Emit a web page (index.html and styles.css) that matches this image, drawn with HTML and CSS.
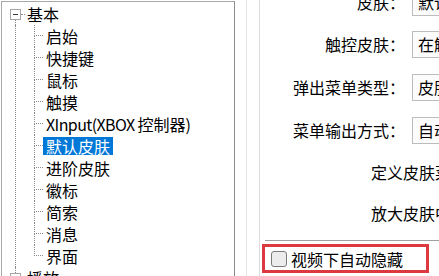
FILE: index.html
```html
<!DOCTYPE html>
<html lang="zh-CN">
<head>
<meta charset="utf-8">
<title>设置</title>
<link rel="stylesheet" href="styles.css">
</head>
<body>
<div class="window">
  <div class="tree-panel">
    <ul class="tree">
      <li class="node open">
        <div class="row">
          <span class="gutter"><span class="exp minus"></span></span>
          <span class="hline"></span>
          <span class="label">基本</span>
        </div>
        <ul class="children">
          <li class="leaf"><span class="elbow"></span><span class="label">启始</span></li>
          <li class="leaf"><span class="elbow"></span><span class="label">快捷键</span></li>
          <li class="leaf"><span class="elbow"></span><span class="label">鼠标</span></li>
          <li class="leaf"><span class="elbow"></span><span class="label">触摸</span></li>
          <li class="leaf"><span class="elbow"></span><span class="label"><span class="latin">XInput(XBOX </span>控制器)</span></li>
          <li class="leaf"><span class="elbow"></span><span class="label selected">默认皮肤</span></li>
          <li class="leaf"><span class="elbow"></span><span class="label">进阶皮肤</span></li>
          <li class="leaf"><span class="elbow"></span><span class="label">徽标</span></li>
          <li class="leaf"><span class="elbow"></span><span class="label">简索</span></li>
          <li class="leaf"><span class="elbow"></span><span class="label">消息</span></li>
          <li class="leaf"><span class="elbow"></span><span class="label">界面</span></li>
        </ul>
      </li>
      <li class="node next">
        <div class="row">
          <span class="gutter"><span class="exp plus"></span></span>
          <span class="hline"></span>
          <span class="label">播放</span>
        </div>
      </li>
    </ul>
  </div>
  <div class="splitter"></div>
  <div class="content">
    <div class="form">
      <div class="f-label">皮肤：</div>
      <div class="combo">默认皮肤</div>
      <div class="f-label">触控皮肤：</div>
      <div class="combo">在触控时使用</div>
      <div class="f-label">弹出菜单类型：</div>
      <div class="combo">皮肤菜单</div>
      <div class="f-label">菜单输出方式：</div>
      <div class="combo">自动选择</div>
      <div class="f-wide">定义皮肤菜单颜色</div>
      <div class="f-wide">放大皮肤中文字</div>
    </div>
    <div class="sep"></div>
    <div class="highlight">
      <label class="check"><span class="box"></span><span>视频下自动隐藏</span></label>
    </div>
  </div>
</div>
</body>
</html>
```
FILE: styles.css
```css
html, body {
  margin: 0;
  padding: 0;
  background: #ffffff;
  width: 439px;
  height: 276px;
  overflow: hidden;
}
body {
  font-family: "Noto Sans CJK SC", "Noto Sans", sans-serif;
  font-size: 16px;
  color: #000;
}
.window {
  display: flex;
  align-items: flex-start;
  height: 276px;
}
.tree-panel {
  margin: 1px 0 0 1px;
  width: 234px;
  height: 300px;
  box-sizing: border-box;
  border: 1px solid #a8a8a8;
  border-right-color: #8c8c8c;
  border-bottom: none;
  flex: none;
  overflow: hidden;
}
.tree, .children {
  list-style: none;
  margin: 0;
  padding: 0;
}
.tree {
  padding: 1px 0 0 8px;
}
.row, .leaf {
  display: flex;
  align-items: center;
  height: 22px;
}
.gutter {
  width: 11px;
  height: 22px;
  display: flex;
  flex-direction: column;
  align-items: center;
  flex: none;
}
.gutter::before {
  content: "";
  height: 6px;
  flex: none;
}
.next .gutter::before {
  border-left: 1px dotted #8a8a8a;
}
.gutter::after {
  content: "";
  flex: 1;
}
.open .gutter::after {
  border-left: 1px dotted #8a8a8a;
}
.exp {
  width: 11px;
  height: 11px;
  box-sizing: border-box;
  border: 1px solid #a6a6a6;
  background: #fff;
  display: flex;
  align-items: center;
  justify-content: center;
  flex: none;
  position: relative;
}
.exp::before {
  content: "";
  width: 5px;
  height: 1px;
  background: #3c3c3c;
}
.plus::after {
  content: "";
  position: absolute;
  width: 1px;
  height: 5px;
  background: #3c3c3c;
}
.hline {
  width: 4px;
  border-top: 1px dotted #8a8a8a;
  flex: none;
}
.label {
  padding: 0 3px 0 2px;
  line-height: 18px;
  height: 18px;
  white-space: nowrap;
}
.latin {
  letter-spacing: -0.6px;
}
.children {
  margin-left: 5px;
  border-left: 1px dotted #8a8a8a;
  padding-left: 18px;
}
.elbow {
  width: 9px;
  height: 22px;
  display: flex;
  flex-direction: column;
  flex: none;
}
.elbow::before {
  content: "";
  height: 11px;
  box-sizing: border-box;
  border-left: 1px dotted #8a8a8a;
  border-bottom: 1px dotted #8a8a8a;
}
.elbow::after {
  content: "";
  flex: 1;
  border-left: 1px dotted #8a8a8a;
}
.leaf:last-child .elbow::after {
  border-left: none;
}
.leaf .label {
  padding: 0 3px;
}
.selected {
  background: #0078d7;
  color: #fff;
}
.splitter {
  margin-left: 11px;
  width: 1px;
  height: 276px;
  background: #e6e6e6;
  flex: none;
}
.content {
  margin-left: 12px;
  flex: 1;
  height: 276px;
  border-left: 1px solid #dcdcdc;
  overflow: hidden;
  min-width: 0;
}
.form {
  margin-top: -19px;
  display: grid;
  grid-template-columns: 145px 130px;
  grid-template-rows: 42px 42px 44px 42px 41px 42px;
  column-gap: 7px;
  align-items: center;
}
.f-label {
  text-align: right;
  white-space: nowrap;
  line-height: 20px;
}
.combo {
  height: 27px;
  box-sizing: border-box;
  border: 1px solid #bcbcbc;
  background: #fcfcfc;
  padding-left: 5px;
  line-height: 25px;
  white-space: nowrap;
  overflow: hidden;
}
.f-wide {
  grid-column: 1 / -1;
  padding-left: 111px;
  white-space: nowrap;
  line-height: 20px;
}
.sep {
  margin: 6px 0 0 5px;
  height: 1px;
  background: #a0a0a0;
}
.highlight {
  margin: 3px 0 0 2px;
  width: 167px;
  height: 29px;
  box-sizing: border-box;
  border: 3px solid #dc3a40;
  display: flex;
  align-items: center;
  padding-left: 6px;
}
.check {
  display: flex;
  align-items: center;
  gap: 4px;
  white-space: nowrap;
  line-height: 20px;
}
.box {
  width: 16px;
  height: 16px;
  box-sizing: border-box;
  border: 1px solid #7a7a7a;
  border-radius: 3px;
  background: #ececec;
  flex: none;
}
```
